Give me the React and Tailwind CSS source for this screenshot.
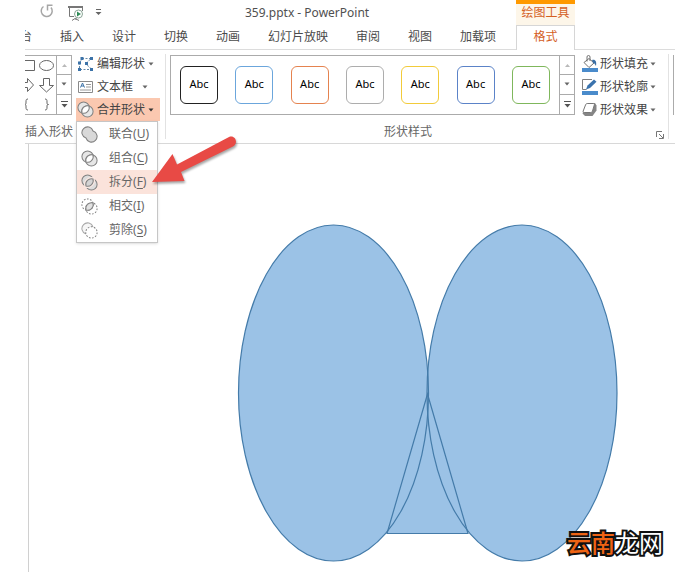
import React from "react";

const tabs = ["插入", "设计", "切换", "动画", "幻灯片放映", "审阅", "视图", "加载项"];

const styleSwatches = [
  "border-[#222222]",
  "border-[#6ba6dc]",
  "border-[#e5834f]",
  "border-[#adadad]",
  "border-[#f2cb3a]",
  "border-[#5b83c8]",
  "border-[#7fb75c]",
];

function Caret({ className = "text-[#666666]" }) {
  return (
    <svg width="6" height="4" viewBox="0 0 6 4" className={`shrink-0 ${className}`} aria-hidden="true">
      <path d="M0.5 0.5h5L3 3.5z" fill="currentColor" />
    </svg>
  );
}

function GalleryScroll({ label }) {
  return (
    <div className="grid w-[15px] shrink-0 grid-rows-3 divide-y divide-[#ababab] border-l border-[#ababab]">
      <button aria-label={`${label} 上一行`} className="grid place-items-center">
        <svg width="5" height="3" viewBox="0 0 5 3"><path d="M0 3h5L2.5 0z" fill="#b9b9b9" /></svg>
      </button>
      <button aria-label={`${label} 下一行`} className="grid place-items-center">
        <Caret />
      </button>
      <button aria-label={`${label} 更多`} className="grid place-items-center">
        <svg width="7" height="7" viewBox="0 0 7 7"><path d="M0 0h7v1H0zM0.5 3h6l-3 3.5z" fill="#555" /></svg>
      </button>
    </div>
  );
}

function EditShapeIcon() {
  return (
    <svg width="17" height="16" viewBox="0 0 17 16" aria-hidden="true">
      <path d="M5 2.500h8M13.500 3.500C9 5 9 10 14 12.500M12 13.500H4M2.500 12V7M3 6l2-3" fill="none" stroke="#6488a8" strokeDasharray="2 1.500" />
      <path d="M3.500 1h3v3h-3zM13 1h3v3h-3zM8 6h3v3H8zM1 5.500h3v3H1zM1 12h3v3H1zM13 12h3v3h-3z" fill="#3b72a8" />
    </svg>
  );
}

function TextBoxIcon() {
  return (
    <svg width="17" height="16" viewBox="0 0 17 16" aria-hidden="true">
      <path d="M1.500 2.500h14v11h-14z" fill="#fff" stroke="#8a8a8a" />
      <path d="M3.500 8.500L5.500 4l2 4.500M4.200 7h2.700" fill="none" stroke="#3b72a8" />
      <path d="M9 5.500h5M9 8h5M3 11h11" stroke="#9a9a9a" />
    </svg>
  );
}

function MergeIcon({ kind }) {
  const a = { cx: 6.800, cy: 6.800, r: 5 };
  const b = { cx: 10.200, cy: 10.200, r: 5 };
  // Lens where the two circles overlap
  const lens = "M5.400 11.600A5 5 0 0 1 11.600 5.400A5 5 0 0 1 5.400 11.600z";
  return (
    <svg width="17" height="17" viewBox="1 1 15 15" fill="none" stroke="#808080" strokeWidth="0.900" aria-hidden="true">
      {kind === "union" && (
        <path d="M11.600 5.400A5 5 0 1 0 5.400 11.600A5 5 0 1 0 11.600 5.400z" fill="#d9d9d9" />
      )}
      {kind === "combine" && (
        <>
          <circle {...a} fill="#e6e6e6" />
          <circle {...b} fill="#e6e6e6" />
          <path d={lens} fill="#fff" />
        </>
      )}
      {kind === "fragment" && (
        <>
          <circle {...a} fill="#dcdcdc" />
          <circle {...b} fill="#dcdcdc" />
          <path d={lens} fill="#fff" strokeWidth="3" stroke="#fbe9e3" />
          <path d={lens} fill="#d4d4d4" />
        </>
      )}
      {kind === "intersect" && (
        <>
          <circle {...a} strokeDasharray="1.500 1.300" />
          <circle {...b} strokeDasharray="1.500 1.300" />
          <path d={lens} fill="#e2e2e2" />
        </>
      )}
      {kind === "subtract" && (
        <>
          <path d="M11.600 5.400A5 5 0 1 0 5.400 11.600" fill="#f6f6f6" stroke="#a8a8a8" />
          <circle {...b} fill="#fff" strokeDasharray="1.500 1.300" />
        </>
      )}
    </svg>
  );
}

function FillIcon() {
  return (
    <svg width="17" height="17" viewBox="0 0 17 17" aria-hidden="true">
      <path d="M3 7.500l5-4 5 4.500-5 4.500z" fill="#fff" stroke="#707070" />
      <path d="M6 6.500V2a1.500 1.500 0 0 1 3 0v4" fill="none" stroke="#707070" />
      <path d="M11 5c3-1 5 1 4 6-1-1-1-3-3-3z" fill="#3a6fa6" />
      <path d="M1 13h16v4H1z" fill="#4a8bcb" />
    </svg>
  );
}

function OutlineIcon() {
  return (
    <svg width="17" height="17" viewBox="0 0 17 17" aria-hidden="true">
      <path d="M11 1.500H1.500v10h4" fill="none" stroke="#808080" />
      <path d="M5 11.500l1.500-4L13 1.500l2.500 2.300L9 10z" fill="#3a73ad" />
      <path d="M1 13h16v4H1z" fill="#4a8bcb" />
    </svg>
  );
}

function EffectIcon() {
  return (
    <svg width="17" height="17" viewBox="0 0 17 17" aria-hidden="true">
      <path d="M6 2h8l1.500 2.500v5l-4 5.500H4l-2.500-2.500z" fill="#858585" />
      <path d="M6.500 2.500h5.800c1 0 1.300.5 1 1.500l-1.800 6c-.3 1-1 1.500-2 1.500H3.200c-1 0-1.300-.6-1-1.500l2.300-6c.3-1 1-1.500 2-1.500z" fill="#fff" stroke="#777" />
    </svg>
  );
}

const mergeItems = [
  { kind: "union", text: "联合", key: "U" },
  { kind: "combine", text: "组合", key: "C" },
  { kind: "fragment", text: "拆分", key: "F", active: true },
  { kind: "intersect", text: "相交", key: "I" },
  { kind: "subtract", text: "剪除", key: "S" },
];

const formatButtons = [
  { text: "形状填充", Icon: FillIcon },
  { text: "形状轮廓", Icon: OutlineIcon },
  { text: "形状效果", Icon: EffectIcon },
];

function TitleBar() {
  return (
    <header className="grid h-[25px] grid-cols-[491px_59px_1fr]">
      <div className="flex items-center pl-[14px]">
        <button aria-label="重复" className="-mt-1">
          <svg width="16" height="16" viewBox="0 0 16 16" fill="none" stroke="#a6a6a6" strokeWidth="1.500">
            <path d="M4.500 3.500a5.500 5.500 0 1 0 7.500 1M8.500 7.500V2.200h5" />
          </svg>
        </button>
        <button aria-label="从头开始放映" className="ml-3">
          <svg width="18" height="18" viewBox="0 0 18 18" fill="none" stroke="#777">
            <path d="M1 3h15" strokeWidth="2" />
            <path d="M2.500 4v8.500H7M15.500 4v3M9 14v2M5 16.500l3-2 4 2" />
            <circle cx="11.500" cy="10" r="4" fill="#fff" stroke="#8ba697" />
            <path d="M10 7.500v5l4-2.500z" fill="#2e8b57" stroke="none" />
          </svg>
        </button>
        <button aria-label="自定义快速访问工具栏" className="ml-[10px]">
          <svg width="7" height="7" viewBox="0 0 7 7"><path d="M1 0h5v1H1zM0.500 3h6l-3 3z" fill="#666" /></svg>
        </button>
        <h1 className="ml-[143px] text-xs leading-[25px] text-[#505050]">359.pptx - PowerPoint</h1>
      </div>
      <div className="border-t-4 border-[#ff9900] bg-[#fdf6e9] text-center text-xs leading-[17px] text-[#d4601f]">
        绘图工具
      </div>
    </header>
  );
}

function TabRow() {
  return (
    <nav className="grid h-[25px] grid-cols-[491px_59px_1fr] text-xs text-[#4a4a4a]">
      <div className="flex items-center gap-7 border-b border-[#dcdcdc]">
        <button className="flex w-[7px] justify-end overflow-hidden whitespace-nowrap">台</button>
        {tabs.map((t) => (
          <button key={t} className="whitespace-nowrap">{t}</button>
        ))}
      </div>
      <button className="border-x border-t border-[#d6d6d6] pb-[2px] text-[#d4601f]">格式</button>
      <div className="border-b border-[#dcdcdc]" />
    </nav>
  );
}

function MergeMenu() {
  return (
    <div role="menu" className="absolute top-full left-0 z-10 w-[82px] border border-[#c6c6c6] bg-white shadow-sm">
      {mergeItems.map(({ kind, text, key, active }) => (
        <button
          key={kind}
          role="menuitem"
          className={`flex h-6 w-full items-center gap-[11px] pl-1 whitespace-nowrap text-[#666666] ${active ? "bg-[#fbe3db]" : ""}`}
        >
          <MergeIcon kind={kind} />
          <span>
            {text}(<u className="underline-offset-2">{key}</u>)
          </span>
        </button>
      ))}
    </div>
  );
}

function InsertShapesGroup() {
  return (
    <section className="w-[140px] shrink-0">
      <div className="flex">
        <div className="mt-[5px] flex h-[60px] w-[47px] shrink-0 border-y border-r border-[#ababab]">
          <svg width="31" height="58" viewBox="0 0 31 58" fill="none" stroke="#666" aria-hidden="true">
            <path d="M-1 4.500H9.500v10H-1" />
            <ellipse cx="21.500" cy="9.500" rx="7" ry="5" />
            <path d="M-1 26.500H2.500v-4L8.500 29l-6 6.500v-4H-1" />
            <path d="M18.500 22.500h6v7h4L21.500 36l-7-6.500h4z" />
            <path d="M3 43c-2 0-2 1-2 3s0 2.500-1.500 2.500C1 48.500 1 49 1 51s0 3 2 3M20 43c2 0 2 1 2 3s0 2.500 1.500 2.500C22 48.500 22 49 22 51s0 3-2 3" />
          </svg>
          <GalleryScroll label="形状" />
        </div>
        <div className="ml-1 pt-[2px]">
          <button className="flex h-[23px] items-center gap-[3px] pl-px whitespace-nowrap">
            <EditShapeIcon />
            <span>编辑形状</span>
            <Caret />
          </button>
          <button className="flex h-[23px] items-center gap-[3px] pl-px whitespace-nowrap">
            <TextBoxIcon />
            <span className="pr-[6px]">文本框</span>
            <Caret />
          </button>
          <div className="relative">
            <button aria-haspopup="menu" aria-expanded="true" className="flex h-[23px] w-[84px] items-center gap-[3px] bg-[#fbc8b0] pl-px whitespace-nowrap">
              <MergeIcon kind="combine" />
              <span>合并形状</span>
              <Caret className="text-[#333333]" />
            </button>
            <MergeMenu />
          </div>
        </div>
      </div>
      <p className="mt-[2px] leading-[18px] text-[#666666]">插入形状</p>
    </section>
  );
}

function ShapeStylesGroup() {
  return (
    <section className="flex w-[502px] shrink-0 flex-col">
      <div className="flex">
        <div className="mt-[5px] ml-1 flex h-[60px] w-[405px] border border-[#ababab]">
          <div className="flex flex-1 items-center justify-between px-[9px]">
            {styleSwatches.map((border) => (
              <button
                key={border}
                className={`h-[38px] w-[38px] rounded-md border bg-white pb-[2px] text-[11px] text-black ${border}`}
              >
                Abc
              </button>
            ))}
          </div>
          <GalleryScroll label="形状样式" />
        </div>
        <div className="ml-[6px] pt-[2px]">
          {formatButtons.map(({ text, Icon }) => (
            <button key={text} className="flex h-[23px] items-center gap-[2px] whitespace-nowrap">
              <Icon />
              <span>{text}</span>
              <Caret />
            </button>
          ))}
        </div>
      </div>
      <div className="mt-[2px] grid grid-cols-[1fr_auto_1fr] text-[#666666]">
        <p className="col-start-2 pr-[18px] leading-[18px]">形状样式</p>
        <button aria-label="设置形状格式" className="mr-1 mb-[2px] self-end justify-self-end">
          <svg width="8" height="8" viewBox="0 0 8 8" fill="none" stroke="#777">
            <path d="M0.500 6V0.500H6M3 3l4 4M7.500 3v4.500H3" />
          </svg>
        </button>
      </div>
    </section>
  );
}

function Ribbon() {
  return (
    <div className="flex h-[94px] overflow-visible border-b border-[#d8d8d8] text-xs text-[#444444]">
      <InsertShapesGroup />
      <div className="mt-1 h-[85px] border-l border-[#e2e2e2]" />
      <ShapeStylesGroup />
      <div className="mt-1 h-[85px] w-[5px] border-l border-[#e2e2e2]" />
      <div className="mt-[5px] h-[60px] border-l border-[#ababab]" />
    </div>
  );
}

function Slide() {
  return (
    <main className="ml-[3px] border-l border-[#d0d0d0]">
      <svg width="646" height="428" viewBox="29 144 646 428" className="block" role="img" aria-label="两个椭圆与一个三角形">
        <g fill="#9bc2e6">
          <ellipse cx="333.500" cy="393" rx="95" ry="168" />
          <ellipse cx="522" cy="393" rx="95" ry="168" />
          <path d="M427.500 394L387 533.500H468z" />
        </g>
        <g fill="none" stroke="#447ba9" strokeWidth="1.200">
          <ellipse cx="333.500" cy="393" rx="95" ry="168" />
          <ellipse cx="522" cy="393" rx="95" ry="168" />
          <path d="M427.500 394L387 533.500H468z" />
        </g>
      </svg>
    </main>
  );
}

function Pointer() {
  return (
    <svg
      width="96"
      height="60"
      viewBox="148 132 96 60"
      className="pointer-events-none absolute top-[132px] left-[123px] z-20 drop-shadow-[1px_2px_1px_rgba(0,0,0,0.35)]"
      aria-hidden="true"
    >
      <path d="M152 182L172.500 154L177 164.500L229 137C235 134.500 239 143 233 146.500L181 172L184.500 181z" fill="#e84a45" />
    </svg>
  );
}

export default function App() {
  return (
    <div className="relative min-h-screen overflow-hidden bg-white px-[25px] font-['Noto_Sans','Noto_Sans_CJK_SC',sans-serif]">
      <div className="relative">
        <TitleBar />
        <TabRow />
        <Ribbon />
        <Slide />
        <Pointer />
        <p className="absolute right-3 bottom-[11px] text-2xl leading-[36px] text-white [-webkit-text-stroke:4px_#111111] [paint-order:stroke]">
          <span className="font-medium text-[#ee6314]">云南</span>龙网
        </p>
      </div>
    </div>
  );
}
